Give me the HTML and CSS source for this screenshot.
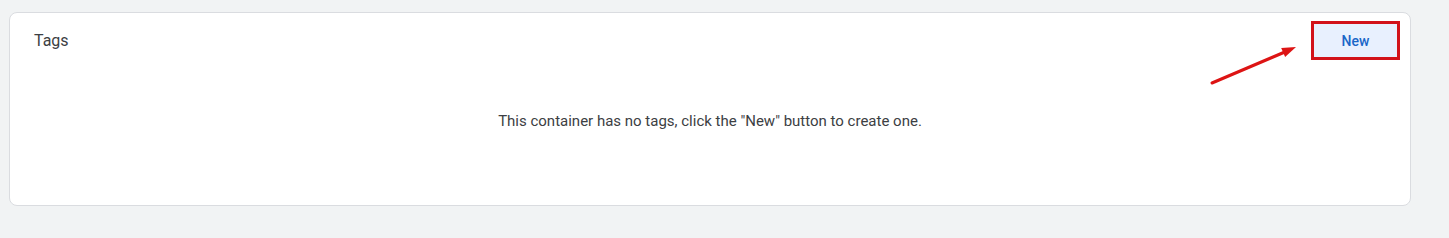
FILE: index.html
```html
<!DOCTYPE html>
<html lang="en">
<head>
<meta charset="utf-8">
<title>Tags</title>
<link rel="stylesheet" href="styles.css">
</head>
<body>
  <section class="card">
    <div class="card-header">
      <h2 class="card-title">Tags</h2>
      <button class="btn-new" type="button">New</button>
    </div>
    <p class="empty-msg">This container has no tags, click the "New" button to create one.</p>
    <svg class="annot-arrow" width="100" height="50" viewBox="0 0 100 50" aria-hidden="true">
      <line x1="7" y1="43" x2="81" y2="11.5" stroke="#dd1414" stroke-width="3" stroke-linecap="round"/>
      <polygon points="91,7 80.1,17.1 76.2,7.9" fill="#dd1414"/>
    </svg>
  </section>
</body>
</html>
```
FILE: styles.css
```css
* { box-sizing: border-box; }

html, body {
  margin: 0;
  padding: 0;
  background: #f1f3f4;
  font-family: Roboto, "Liberation Sans", Arial, sans-serif;
  color: #3c4043;
}

body {
  padding: 12px 0 0 9px;
  height: 238px;
  overflow: hidden;
}

.card {
  position: relative;
  width: 1402px;
  height: 194px;
  background: #ffffff;
  border: 1px solid #dadce0;
  border-radius: 8px;
}

.card-header {
  display: flex;
  justify-content: space-between;
  align-items: flex-start;
  padding: 11px 12px 0 24px;
}

.card-title {
  margin: 5px 0 0 0;
  font-size: 16px;
  font-weight: 400;
  line-height: 24px;
  color: #3c4043;
}

.btn-new {
  width: 83px;
  height: 33px;
  border: none;
  border-radius: 0;
  background: #e8f0fe;
  color: #1a66c8;
  font-family: inherit;
  font-size: 14px;
  font-weight: 500;
  outline: 3px solid #d2121a;
  padding: 0;
  margin-right: 1px;
}

.empty-msg {
  margin: 54px 0 0 0;
  text-align: center;
  font-size: 15px;
  line-height: 20px;
  color: #3c4043;
}

.annot-arrow {
  position: absolute;
  left: 1195px;
  top: 27px;
  overflow: visible;
}
```
